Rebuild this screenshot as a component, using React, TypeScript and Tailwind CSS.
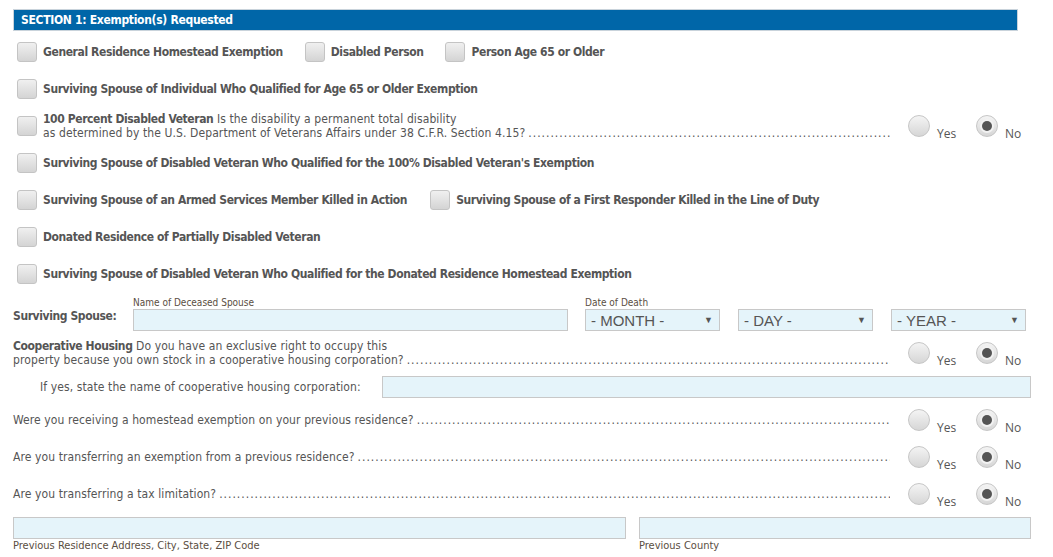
import React from "react";

const FONT = { fontFamily: '"DejaVu Sans Condensed", "DejaVu Sans", Tahoma, sans-serif' };
const DOTS = ".".repeat(260);

function Box() {
  return (
    <span className="inline-block w-[20px] h-[20px] shrink-0 rounded-[3px] border border-[#c4c4c4] bg-gradient-to-b from-[#f0f0f0] to-[#d4d4d4]" />
  );
}

function Check({ label }: { label: string }) {
  return (
    <div className="flex items-center gap-[6px]">
      <Box />
      <span className="font-bold text-[12px] leading-[14px] text-[#555] tracking-[-0.4px]">{label}</span>
    </div>
  );
}

function Radio({ label, checked }: { label: string; checked?: boolean }) {
  return (
    <div className="flex items-end gap-[7px]">
      <span className="w-[22px] h-[22px] shrink-0 rounded-full border border-[#c6c6c6] bg-gradient-to-b from-[#f4f4f4] to-[#d6d6d6] flex items-center justify-center">
        {checked && (
          <span className="w-[10px] h-[10px] rounded-full bg-[#555] shadow-[0_0_0_2px_#f2f2f2]" />
        )}
      </span>
      <span
        className="text-[12px] leading-[14px] text-[#555] translate-y-[4px]"
        style={{ fontFamily: '"Open Sans", "Noto Sans", sans-serif' }}
      >
        {label}
      </span>
    </div>
  );
}

function YesNo() {
  return (
    <div className="w-[141px] shrink-0 pl-[18px] flex">
      <div className="w-[68px]">
        <Radio label="Yes" />
      </div>
      <Radio label="No" checked />
    </div>
  );
}

function Leader() {
  return (
    <span className="flex-1 min-w-0 overflow-hidden whitespace-nowrap text-[12px] leading-[14px] text-[#555] tracking-[1px] pl-[3px]">
      {DOTS}
    </span>
  );
}

function Question({ text }: { text: string }) {
  return (
    <div className="h-[37px] flex items-center">
      <div className="flex-1 min-w-0 flex text-[12px] leading-[14px] text-[#555] tracking-[0.1px]">
        <span className="whitespace-nowrap">{text}</span>
        <Leader />
      </div>
      <YesNo />
    </div>
  );
}

function Select({ label }: { label: string }) {
  return (
    <div
      className="w-[135px] h-[22px] border border-[#c8c8c8] bg-[#e5f4fa] flex items-center justify-between pl-[5px] pr-[6px] text-[15px] text-[#555]"
      style={{ fontFamily: '"Liberation Sans", Arial, sans-serif' }}
    >
      <span className="leading-none">{label}</span>
      <span className="text-[9px] leading-none">▼</span>
    </div>
  );
}

export default function App() {
  return (
    <div className="w-[1053px] h-[557px] bg-white overflow-hidden" style={FONT}>
      <div className="ml-[13px] w-[1018px] pt-[9px]">
        <div className="w-[1005px] h-[22px] bg-[#0066a8] border border-[#c9d3db] flex items-center pl-[7px]">
          <span className="text-white font-bold text-[12px] tracking-[-0.3px]">SECTION 1: Exemption(s) Requested</span>
        </div>

        <div className="pl-[4px] pt-[2px]">
          <div className="h-[37px] flex items-center gap-[22px]">
            <Check label="General Residence Homestead Exemption" />
            <Check label="Disabled Person" />
            <Check label="Person Age 65 or Older" />
          </div>
          <div className="h-[37px] flex items-center">
            <Check label="Surviving Spouse of Individual Who Qualified for Age 65 or Older Exemption" />
          </div>
          <div className="h-[37px] flex items-center">
            <Box />
            <div className="flex-1 min-w-0 ml-[6px] text-[12px] leading-[14px] text-[#555] tracking-[0.1px]">
              <div className="whitespace-nowrap">
                <span className="font-bold tracking-[-0.4px]">100 Percent Disabled Veteran</span> Is the disability a permanent total disability
              </div>
              <div className="flex">
                <span className="whitespace-nowrap">
                  as determined by the U.S. Department of Veterans Affairs under 38 C.F.R. Section 4.15?
                </span>
                <Leader />
              </div>
            </div>
            <YesNo />
          </div>
          <div className="h-[37px] flex items-center">
            <Check label="Surviving Spouse of Disabled Veteran Who Qualified for the 100% Disabled Veteran's Exemption" />
          </div>
          <div className="h-[37px] flex items-center gap-[23px]">
            <Check label="Surviving Spouse of an Armed Services Member Killed in Action" />
            <Check label="Surviving Spouse of a First Responder Killed in the Line of Duty" />
          </div>
          <div className="h-[37px] flex items-center">
            <Check label="Donated Residence of Partially Disabled Veteran" />
          </div>
          <div className="h-[37px] flex items-center">
            <Check label="Surviving Spouse of Disabled Veteran Who Qualified for the Donated Residence Homestead Exemption" />
          </div>
        </div>

        <div className="flex items-end pt-[5px]">
          <div className="w-[120px] h-[22px] pb-[9px] flex items-center font-bold text-[12px] text-[#555] tracking-[-0.4px]">
            Surviving Spouse:
          </div>
          <div className="flex flex-col">
            <span className="text-[10px] leading-[12px] text-[#5a4e42]">Name of Deceased Spouse</span>
            <div className="w-[435px] h-[22px] border border-[#c8c8c8] bg-[#e5f4fa]" />
          </div>
          <div className="flex flex-col ml-[17px]">
            <span className="text-[10px] leading-[12px] text-[#5a4e42]">Date of Death</span>
            <div className="flex gap-[18px]">
              <Select label="- MONTH -" />
              <Select label="- DAY -" />
              <Select label="- YEAR -" />
            </div>
          </div>
        </div>

        <div className="flex items-center pt-[8px]">
          <div className="flex-1 min-w-0 text-[12px] leading-[14px] text-[#555] tracking-[0.1px]">
            <div className="whitespace-nowrap">
              <span className="font-bold tracking-[-0.4px]">Cooperative Housing</span> Do you have an exclusive right to occupy this
            </div>
            <div className="flex">
              <span className="whitespace-nowrap">property because you own stock in a cooperative housing corporation?</span>
              <Leader />
            </div>
          </div>
          <YesNo />
        </div>

        <div className="flex items-center mt-[9px]">
          <span className="pl-[27px] w-[369px] text-[12px] text-[#555] whitespace-nowrap tracking-[0.1px]">
            If yes, state the name of cooperative housing corporation:
          </span>
          <div className="flex-1 h-[22px] border border-[#c8c8c8] bg-[#e5f4fa]" />
        </div>

        <div className="mt-[3px]">
          <Question text="Were you receiving a homestead exemption on your previous residence?" />
          <Question text="Are you transferring an exemption from a previous residence?" />
          <Question text="Are you transferring a tax limitation?" />
        </div>

        <div className="flex gap-[13px] mt-[5px]">
          <div className="w-[613px] flex flex-col">
            <div className="h-[22px] border border-[#c8c8c8] bg-[#e5f4fa]" />
            <span className="text-[11px] leading-[14px] text-[#5a4e42]">Previous Residence Address, City, State, ZIP Code</span>
          </div>
          <div className="flex-1 flex flex-col">
            <div className="h-[22px] border border-[#c8c8c8] bg-[#e5f4fa]" />
            <span className="text-[11px] leading-[14px] text-[#5a4e42]">Previous County</span>
          </div>
        </div>
      </div>
    </div>
  );
}
